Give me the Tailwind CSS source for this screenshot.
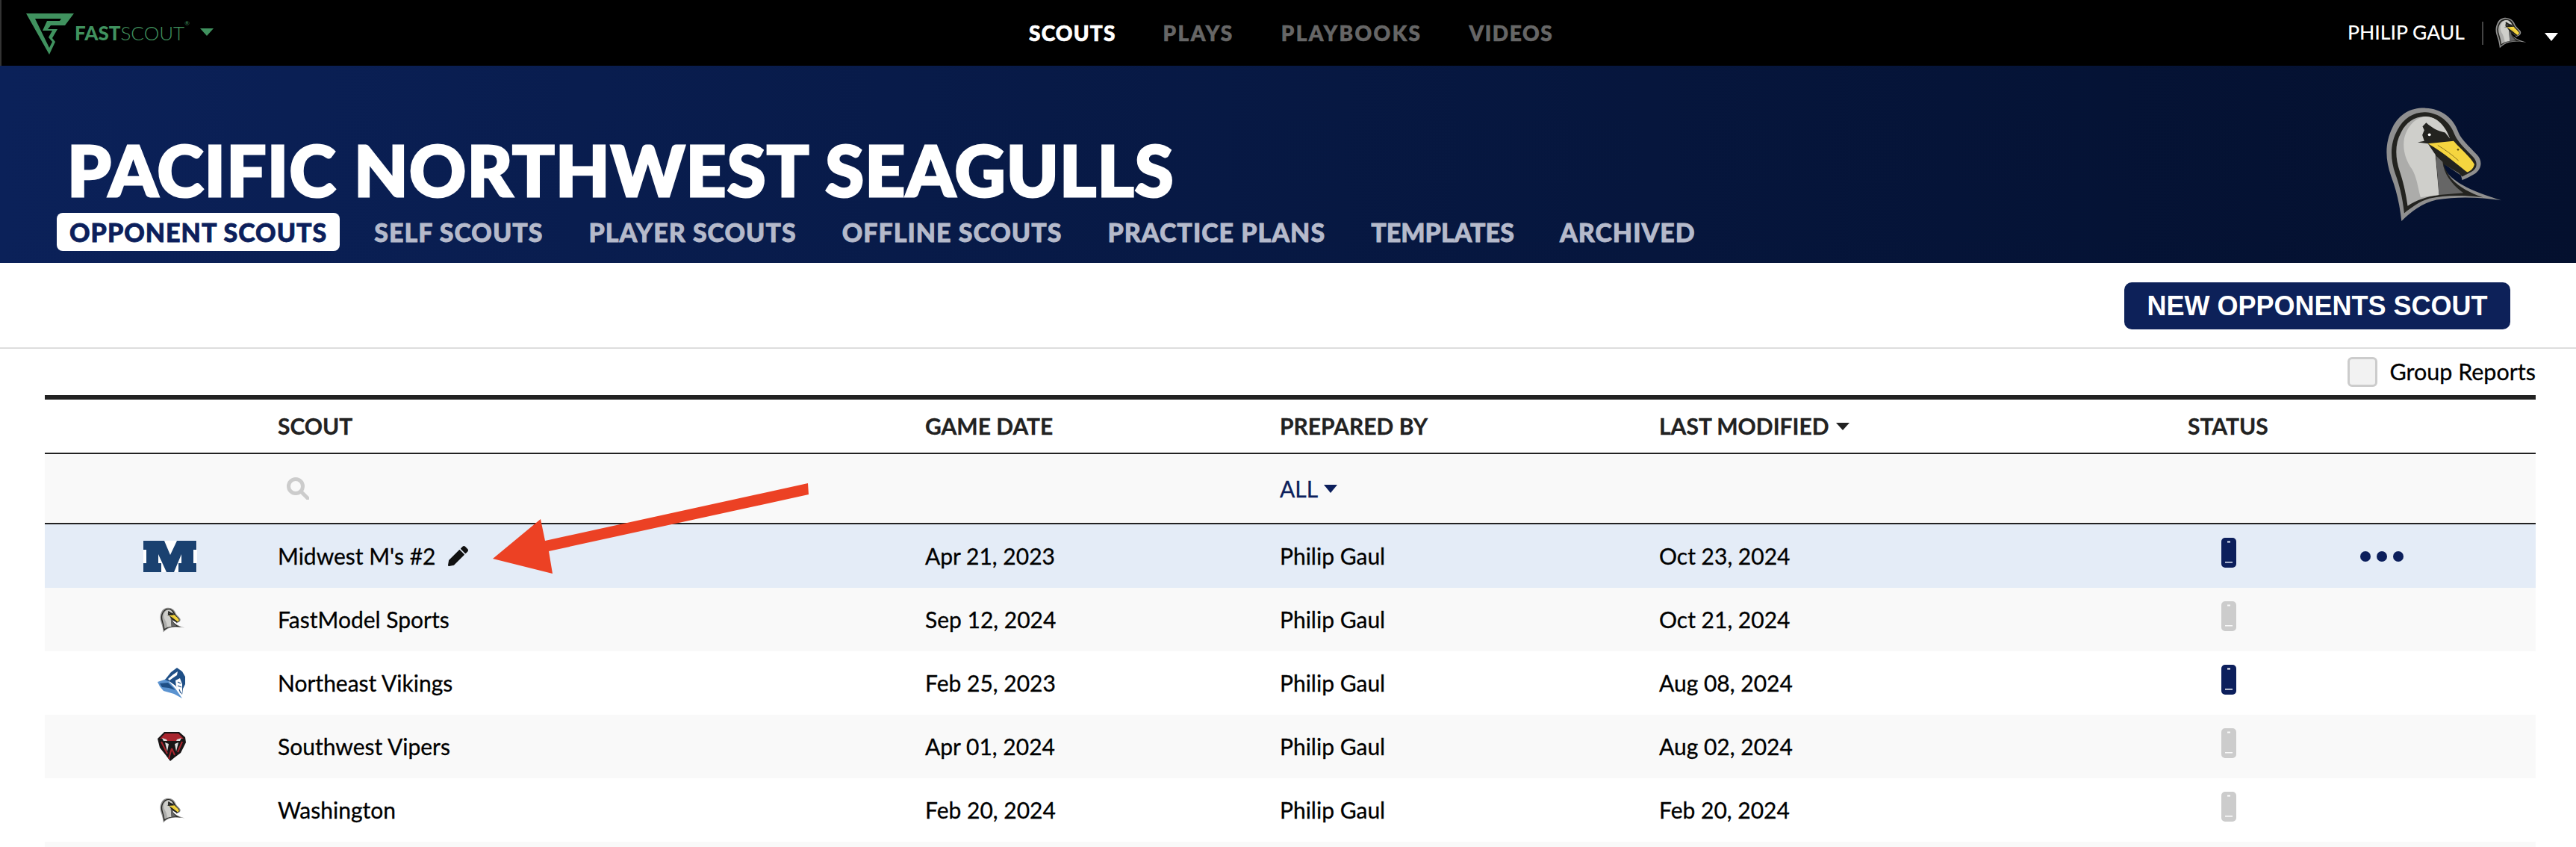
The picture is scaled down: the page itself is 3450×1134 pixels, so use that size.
<!DOCTYPE html>
<html lang="en">
<head>
    <meta charset="UTF-8">
    <title>Pacific Northwest Seagulls - Opponent Scouts</title>
    <script src="https://cdn.jsdelivr.net/npm/@tailwindcss/browser@4"></script>
</head>
<body class="bg-white font-['Lato',sans-serif] text-black">
    <!-- shared gull logo -->
    <svg class="hidden">
        <symbol id="gull" viewBox="130 65 480 470">
            <path fill="#8f8f8f" d="M197 532C190 470 178 410 155 350C130 280 128 215 160 150C190 90 240 68 295 70C360 72 410 110 430 170C440 195 470 225 505 260C530 285 525 320 495 340C475 352 455 360 445 365L440 345L365 295C375 345 430 395 605 447C520 435 430 430 340 445C280 460 240 490 197 532Z"/>
            <path fill="#23231f" d="M208 500C202 445 192 395 172 340C150 275 150 215 180 160C205 110 250 85 295 87C350 90 395 125 415 180C425 205 460 240 490 270C512 295 505 320 480 332L455 345L445 350L430 335L370 300C385 360 440 405 530 435C450 425 370 425 310 440C270 452 240 475 208 500Z"/>
            <path fill="#acacaa" d="M222 470C215 420 205 375 190 330C170 270 170 215 195 170C215 130 250 105 290 105C335 105 370 135 390 190L300 215L335 260L350 425C300 432 260 445 222 470Z"/>
            <path fill="#cfcfcb" d="M275 435C262 390 262 360 240 320C215 285 200 240 208 195C220 145 255 108 295 105C340 105 375 140 395 195L305 215L335 260L350 425C325 428 300 430 275 435Z"/>
            <path fill="#666" d="M338 265L365 290C370 340 405 385 450 417L350 425Z"/>
            <path fill="#23231f" d="M263 210L290 205L282 180L290 160L283 145L298 130C320 150 345 165 375 170L395 195L385 205L305 215Z"/>
            <circle cx="311" cy="179" r="6" fill="#fff"/>
            <path fill="#f5d53f" d="M305 215L410 205C440 240 475 265 495 300C490 320 478 328 465 332C430 305 375 255 305 215Z"/>
            <path fill="none" stroke="#8a7420" stroke-width="3" d="M345 222C375 240 405 262 430 285"/>
            <circle cx="428" cy="240" r="4" fill="#5b4c10"/>
        </symbol>
        <symbol id="phone" viewBox="0 0 20 40">
            <path fill="currentColor" fill-rule="evenodd" d="M5 0H15A5 5 0 0 1 20 5V35A5 5 0 0 1 15 40H5A5 5 0 0 1 0 35V5A5 5 0 0 1 5 0ZM8 4.500V6.500H12V4.500ZM5 32V33.500H15V32Z"/>
        </symbol>
    </svg>

    <!-- top bar -->
    <nav class="relative h-[88px] bg-black border-l-2 border-[#333] flex items-center">
        <div class="flex items-start pl-[33px] w-[1376px]">
            <svg class="w-[64px] h-[55px] mt-[2px]" viewBox="0 0 64 55">
                <path fill="#40925f" fill-rule="evenodd" d="M0 0H64L52 16H33L29 21H42L35 33 39 38 31 55ZM12 7L31 46 35 38 30 32 35 23H22L28 10H45L47 7Z"/>
            </svg>
            <span class="mt-[15px] ml-[1px] text-[26px] leading-[27px] font-black text-[#40925f]">FAST</span>
            <span class="mt-[15px] text-[26px] leading-[27px] font-light text-[#40925f]">SCOUT</span>
            <span class="mt-[11px] text-[8px] leading-[8px] text-[#40925f]">®</span>
            <span class="mt-[22px] ml-[14px] w-0 h-0 border-x-[9px] border-x-transparent border-t-[10px] border-t-[#40925f]"></span>
        </div>
        <div class="flex gap-[63px] text-[28px] leading-none font-black">
            <a class="tracking-[1.200px] text-white [-webkit-text-stroke:0.7px_white]">SCOUTS</a>
            <a class="tracking-[2.500px] text-[#666] [-webkit-text-stroke:0.7px_#666]">PLAYS</a>
            <a class="tracking-[2.400px] text-[#666] [-webkit-text-stroke:0.7px_#666]">PLAYBOOKS</a>
            <a class="tracking-[1.600px] text-[#666] [-webkit-text-stroke:0.7px_#666]">VIDEOS</a>
        </div>
        <div class="ml-auto flex items-center pr-[24px]">
            <span class="text-white text-[26.500px] font-medium">PHILIP GAUL</span>
            <span class="ml-[23px] mr-[16px] w-[2px] h-[31px] bg-[#444]"></span>
            <svg class="w-[42px] h-[42px]"><use href="#gull"/></svg>
            <span class="ml-[24px] mt-[10px] w-0 h-0 border-x-[9px] border-x-transparent border-t-[11px] border-t-white"></span>
        </div>
    </nav>

    <!-- team header -->
    <header class="h-[264px] bg-linear-to-r from-[#0b2159] to-[#04102e] flex justify-between">
        <div class="pt-[89px] pl-[76px]">
            <h1 class="pl-[14px] text-white text-[94px] leading-[100px] font-black tracking-[1.200px] [-webkit-text-stroke:3px_white]">PACIFIC NORTHWEST SEAGULLS</h1>
            <div class="flex items-center mt-[8px] text-[34px] leading-none font-black tracking-[1px] text-[#b5bacb] gap-[61px] [-webkit-text-stroke:0.8px]">
                <a class="h-[51px] px-[17px] -mr-[15px] flex items-center rounded-lg bg-white text-[#0c1f5c]">OPPONENT SCOUTS</a>
                <a>SELF SCOUTS</a>
                <a>PLAYER SCOUTS</a>
                <a>OFFLINE SCOUTS</a>
                <a>PRACTICE PLANS</a>
                <a class="tracking-normal">TEMPLATES</a>
                <a>ARCHIVED</a>
            </div>
        </div>
        <svg class="w-[158px] h-[154px] mt-[55px] mr-[98px]"><use href="#gull"/></svg>
    </header>

    <!-- action bar -->
    <div class="h-[115px] border-b-2 border-[#ddd] flex items-start justify-end pt-[26px] pr-[88px]">
        <button class="h-[63px] w-[517px] rounded-[10px] bg-[#0d2159] text-white text-[36px] font-bold font-['Liberation_Sans',sans-serif]">NEW OPPONENTS SCOUT</button>
    </div>

    <main class="mx-[60px] w-[3336px] [-webkit-text-stroke:0.3px]">
        <div class="h-[62px] flex items-center justify-end gap-[16px] text-[30.500px]">
            <span class="w-[40px] h-[40px] rounded-md border-[3px] border-[#ccc] bg-[#f2f2f2]"></span>
            <span>Group Reports</span>
        </div>

        <div class="border-t-[6px] border-[#222]">
            <div class="h-[71px] grid grid-cols-[312px_867px_475px_508px_708px_1fr] items-center text-[30px] font-bold text-[#222]">
                <span></span>
                <span>SCOUT</span>
                <span>GAME DATE</span>
                <span>PREPARED BY</span>
                <span class="flex items-center gap-[9px]">LAST MODIFIED <i class="w-0 h-0 border-x-[9px] border-x-transparent border-t-[10px] border-t-[#222]"></i></span>
                <span>STATUS</span>
            </div>
            <div class="h-[96px] bg-[#f9f9f9] border-y-2 border-[#222] grid grid-cols-[312px_867px_475px_1fr] items-center">
                <span></span>
                <svg class="ml-[12px] w-[30px] h-[30px]" viewBox="0 0 30 30" fill="none" stroke="#ccc" stroke-width="5"><circle cx="12" cy="12" r="9.500"/><path d="M19 19L28 28" stroke-linecap="round"/></svg>
                <span></span>
                <span class="flex items-center gap-[8px] text-[30px] text-[#0c1f5c]">ALL <i class="w-0 h-0 border-x-[9px] border-x-transparent border-t-[11px] border-t-[#0c1f5c]"></i></span>
            </div>

            <!-- Midwest -->
            <div class="h-[85px] bg-[#e4ecf7] grid grid-cols-[132px_180px_867px_475px_508px_745px_194px_1fr] items-center text-[30px]">
                <span></span>
                <svg class="w-[72px] h-[42px] bg-white" viewBox="0 0 72 42"><path fill="#1a4170" d="M0 0H28L36 19 45 0H71V12H67V30H71V42H47V30H51V18L41 42H31L20 18V30H24V42H0V30H4V12H0Z"/></svg>
                <span class="flex items-center gap-[16px]">Midwest M's #2
                    <svg class="w-[29px] h-[27px]" viewBox="0 0 512 512"><path fill="#111" d="M497.900 142.100l-46.100 46.100c-4.700 4.700-12.300 4.700-17 0l-111-111c-4.700-4.700-4.700-12.300 0-17l46.100-46.100c18.700-18.700 49.100-18.700 67.900 0l60.100 60.100c18.800 18.700 18.800 49.100 0 67.900zM284.200 99.800L21.600 362.400.4 483.900c-2.900 16.400 11.400 30.600 27.800 27.800l121.500-21.300 262.600-262.600c4.700-4.700 4.700-12.300 0-17l-111-111c-4.800-4.700-12.400-4.700-17.100 0z"/></svg>
                </span>
                <span>Apr 21, 2023</span><span>Philip Gaul</span><span>Oct 23, 2024</span>
                <svg class="ml-[8px] -mt-[10px] w-[20px] h-[40px] text-[#0c1f5c]"><use href="#phone"/></svg>
                <span class="flex gap-[8px] text-[#0c1f5c]"><i class="w-[14px] h-[14px] rounded-full bg-current"></i><i class="w-[14px] h-[14px] rounded-full bg-current"></i><i class="w-[14px] h-[14px] rounded-full bg-current"></i></span>
            </div>

            <!-- FastModel Sports -->
            <div class="h-[85px] bg-[#f9f9f9] grid grid-cols-[154px_158px_867px_475px_508px_745px_1fr] items-center text-[30px]">
                <span></span>
                <svg class="w-[34px] h-[34px]"><use href="#gull"/></svg>
                <span>FastModel Sports</span><span>Sep 12, 2024</span><span>Philip Gaul</span><span>Oct 21, 2024</span>
                <svg class="ml-[8px] -mt-[10px] w-[20px] h-[40px] text-[#ccc]"><use href="#phone"/></svg>
            </div>

            <!-- Northeast Vikings -->
            <div class="h-[85px] bg-white grid grid-cols-[151px_161px_867px_475px_508px_745px_1fr] items-center text-[30px]">
                <span></span>
                <svg class="w-[38px] h-[41px]" viewBox="0 0 38 41">
                    <path fill="#5b93d0" d="M0 19L12 15 24 28 33 41 22 35 8 31 3 25Z"/>
                    <path fill="#1f4f86" d="M3 21L14 20 24 30 15 27 6 26Z"/>
                    <path fill="#1f4f86" d="M26 0L18 6 10 16 17 19 24 24 30 32 33 36 34 28 37 22 37 12 33 5Z"/>
                    <path fill="#fff" d="M14 15L21 9 27 5 26 10 20 14 16 17Z"/>
                    <path fill="#fff" d="M24 17L30 14 33 22 33 32 31 37 27 31 25 25Z"/>
                    <path fill="none" stroke="#1f4f86" stroke-width="1.200" d="M27 19L31 21M27 24L32 26M29 29L31 34"/>
                </svg>
                <span>Northeast Vikings</span><span>Feb 25, 2023</span><span>Philip Gaul</span><span>Aug 08, 2024</span>
                <svg class="ml-[8px] -mt-[10px] w-[20px] h-[40px] text-[#0c1f5c]"><use href="#phone"/></svg>
            </div>

            <!-- Southwest Vipers -->
            <div class="h-[85px] bg-[#f9f9f9] grid grid-cols-[151px_161px_867px_475px_508px_745px_1fr] items-center text-[30px]">
                <span></span>
                <svg class="w-[38px] h-[39px]" viewBox="0 0 38 39">
                    <path fill="#191516" d="M9 0H29L37 7 38 14 31 28 23 34 17 39 11 31 3 21 0 9Z"/>
                    <path fill="#a8252e" d="M10 2H28L35 9 30 9 25 12H13L7 9 3 9Z"/>
                    <path fill="#ddd" d="M6 8L12 10 13 12 8 12ZM32 8L26 10 25 12 30 12ZM10 14L15 16 13 26ZM28 14L23 16 25 26Z"/>
                    <path fill="none" stroke="#a8252e" stroke-width="2" d="M19 22L15 36M19 22L23 31M5 13L13 29M33 13L27 27"/>
                </svg>
                <span>Southwest Vipers</span><span>Apr 01, 2024</span><span>Philip Gaul</span><span>Aug 02, 2024</span>
                <svg class="ml-[8px] -mt-[10px] w-[20px] h-[40px] text-[#ccc]"><use href="#phone"/></svg>
            </div>

            <!-- Washington -->
            <div class="h-[85px] bg-white grid grid-cols-[154px_158px_867px_475px_508px_745px_1fr] items-center text-[30px]">
                <span></span>
                <svg class="w-[34px] h-[34px]"><use href="#gull"/></svg>
                <span>Washington</span><span>Feb 20, 2024</span><span>Philip Gaul</span><span>Feb 20, 2024</span>
                <svg class="ml-[8px] -mt-[10px] w-[20px] h-[40px] text-[#ccc]"><use href="#phone"/></svg>
            </div>
            <div class="h-[7px] bg-[#f9f9f9]"></div>
        </div>
    </main>

    <!-- annotation arrow -->
    <svg class="absolute left-0 top-0 w-[3450px] h-[1134px] pointer-events-none" viewBox="0 0 3450 1134">
        <path fill="#ec4124" d="M1082 647L1083 662 735 738 740 768 660 748 724 695 730 724Z"/>
    </svg>
</body>
</html>
